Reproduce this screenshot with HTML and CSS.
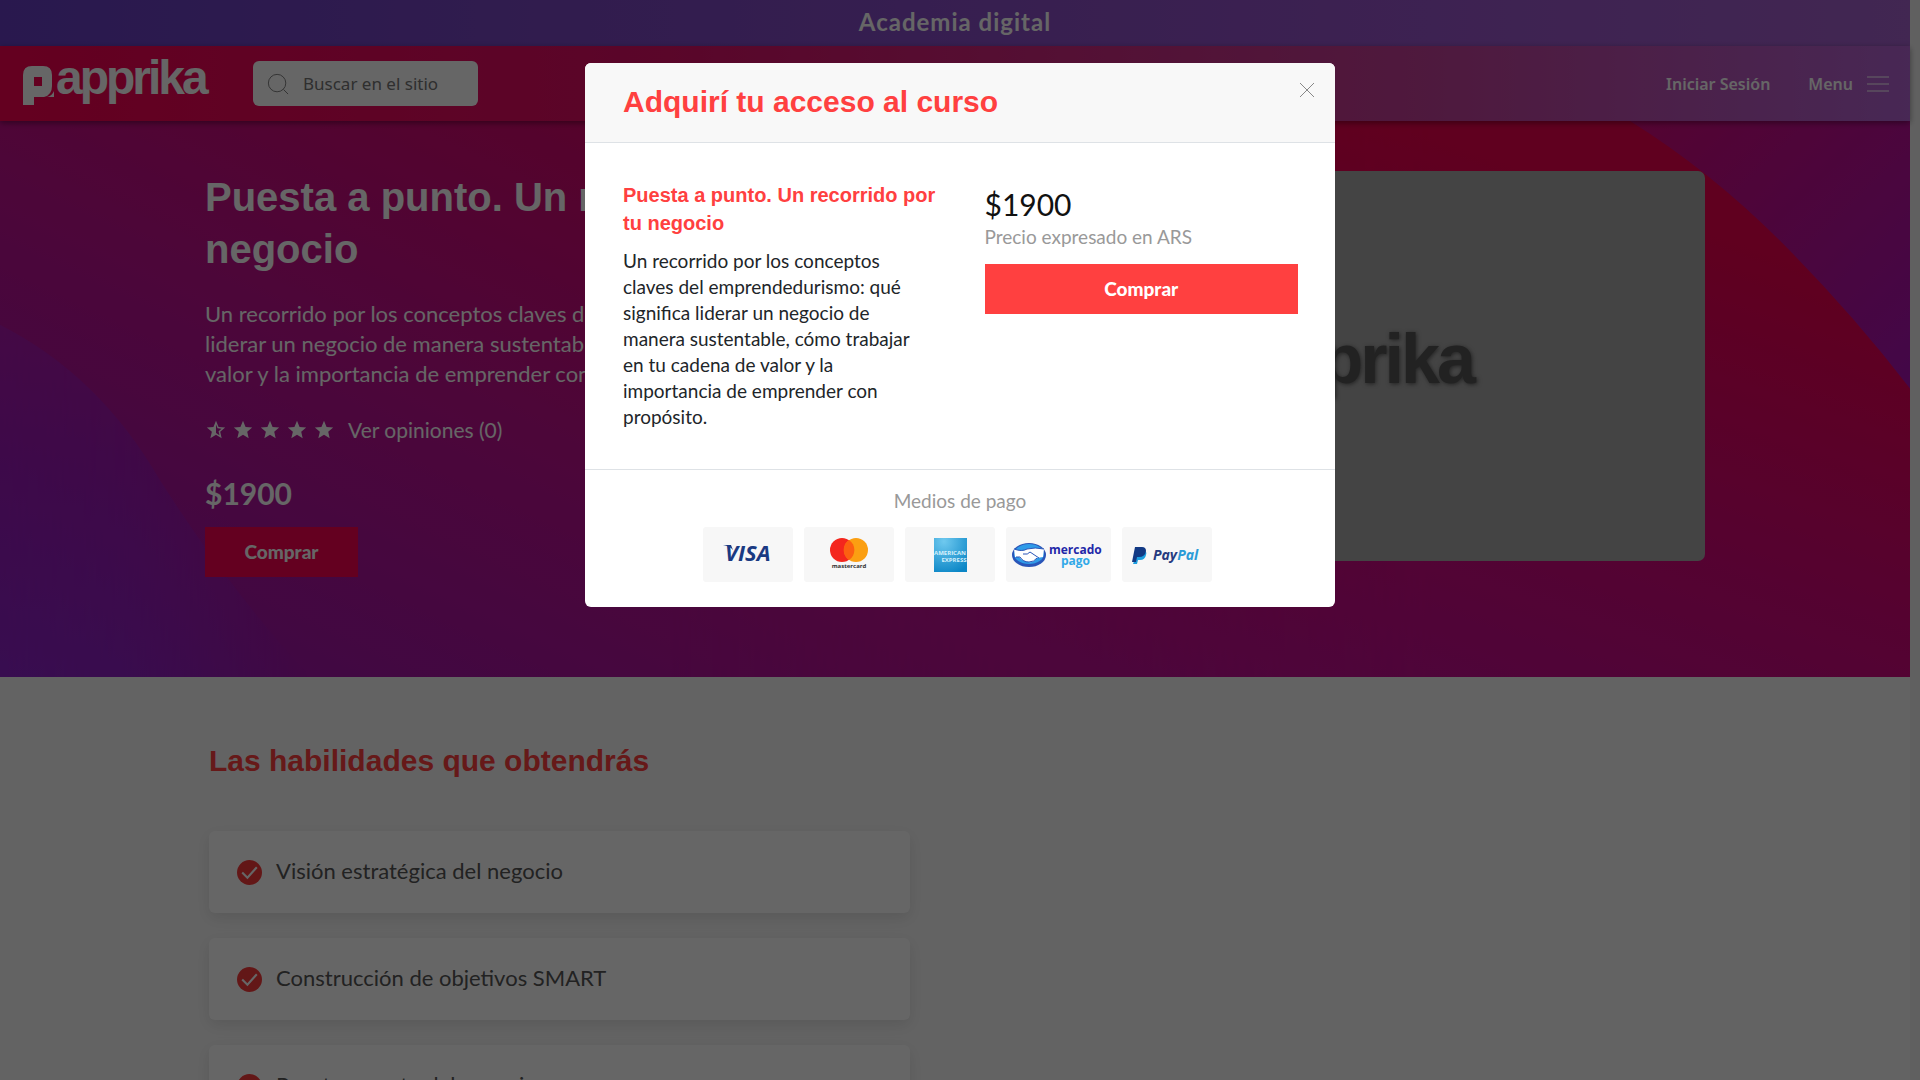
FILE: index.html
```
<!DOCTYPE html>
<html lang="es">

<head>
    <meta charset="UTF-8">
    <meta name="viewport" content="width=device-width, initial-scale=1.0">
    <title>Papprika - Puesta a punto</title>
    <link rel="stylesheet" href="styles.css">
</head>

<body>
    <div class="pagina">
        <div class="barra-superior">Academia digital</div>

        <header class="navbar">
            <a href="#" class="logo" aria-label="Papprika">
                <svg class="logo-p" viewBox="0 0 32 39">
                    <path fill="#fff" fill-rule="evenodd" d="M0 39V9Q0 0 9 0h11q9 0 9 9v11q0 9-8 11H11v8zM11 11v9h8v-9z" />
                    <path fill="#fff" d="M31 25v6h-7q5-1 7-6z" />
                </svg>
                <span>apprika</span>
            </a>
            <form class="buscador">
                <svg viewBox="0 0 24 24"><circle cx="11" cy="11" r="9.5" /><path d="M18 18l5 5" /></svg>
                <input type="text" placeholder="Buscar en el sitio" aria-label="Buscar en el sitio">
            </form>
            <nav class="menu">
                <a href="#">Iniciar Sesión</a>
                <button type="button">
                    Menu
                    <svg viewBox="0 0 22 16"><path d="M0 1h22M0 8h22M0 15h22" /></svg>
                </button>
            </nav>
        </header>

        <section class="hero">
            <svg class="hero-fondo" viewBox="0 0 1910 557" preserveAspectRatio="none" aria-hidden="true">
                <defs>
                    <linearGradient id="base" gradientUnits="userSpaceOnUse" x1="300" y1="650" x2="720" y2="-250">
                        <stop offset="0" stop-color="#9a16ae" />
                        <stop offset="0.4" stop-color="#be1090" />
                        <stop offset="0.75" stop-color="#d80768" />
                        <stop offset="1" stop-color="#f5003c" />
                    </linearGradient>
                    <linearGradient id="base2" gradientUnits="userSpaceOnUse" x1="1300" y1="620" x2="1500" y2="40">
                        <stop offset="0" stop-color="#bc109b" />
                        <stop offset="0.5" stop-color="#d4077a" />
                        <stop offset="1" stop-color="#ef004e" />
                    </linearGradient>
                    <linearGradient id="mezcla" x1="0" y1="0" x2="1" y2="0">
                        <stop offset="0.35" stop-color="#fff" stop-opacity="0" />
                        <stop offset="0.75" stop-color="#fff" />
                    </linearGradient>
                    <mask id="derecha"><rect width="1910" height="557" fill="url(#mezcla)" /></mask>
                    <linearGradient id="violeta" x1="0" y1="0" x2="0" y2="1">
                        <stop offset="0" stop-color="#aa18ac" />
                        <stop offset="0.4" stop-color="#9a18b8" />
                        <stop offset="1" stop-color="#8c22c8" />
                    </linearGradient>
                    <linearGradient id="fundido" x1="0" y1="0" x2="1" y2="0">
                        <stop offset="0" stop-color="#fff" />
                        <stop offset="0.4" stop-color="#fff" stop-opacity="0.8" />
                        <stop offset="1" stop-color="#fff" stop-opacity="0" />
                    </linearGradient>
                    <mask id="izquierda"><rect width="310" height="557" fill="url(#fundido)" /></mask>
                    <linearGradient id="esquina" x1="0" y1="0" x2="1" y2="1">
                        <stop offset="0" stop-color="#d20a7c" />
                        <stop offset="1" stop-color="#a713b4" />
                    </linearGradient>
                </defs>
                <rect width="1910" height="557" fill="url(#base)" />
                <rect width="1910" height="557" fill="url(#base2)" mask="url(#derecha)" />
                <path fill="url(#violeta)" mask="url(#izquierda)" d="M0 204Q100 255 160 360Q230 470 310 557H0z" />
                <path fill="url(#esquina)" d="M1630 0Q1710 50 1780 120Q1850 190 1910 268V0z" />
            </svg>

            <div class="hero-texto">
                <h1>Puesta a punto. Un recorrido por tu negocio</h1>
                <p class="descripcion">Un recorrido por los conceptos claves del emprendedurismo: qué significa liderar un negocio de manera sustentable, cómo trabajar en tu cadena de valor y la importancia de emprender con propósito.</p>
                <div class="opiniones">
                    <svg viewBox="0 0 24 24"><path d="M22 9.200l-7.200-.6L12 2 9.200 8.600 2 9.200l5.500 4.700L5.800 21 12 17.300 18.200 21l-1.600-7.100zM12 15.400V6.100l1.700 4 4.400.4-3.300 2.900 1 4.300z" /></svg>
                    <svg viewBox="0 0 24 24"><path d="M12 17.300L18.200 21l-1.600-7.100L22 9.200l-7.200-.6L12 2 9.200 8.600 2 9.200l5.500 4.700L5.800 21z" /></svg>
                    <svg viewBox="0 0 24 24"><path d="M12 17.300L18.200 21l-1.600-7.100L22 9.200l-7.200-.6L12 2 9.200 8.600 2 9.200l5.500 4.700L5.800 21z" /></svg>
                    <svg viewBox="0 0 24 24"><path d="M12 17.300L18.200 21l-1.600-7.100L22 9.200l-7.200-.6L12 2 9.200 8.600 2 9.200l5.500 4.700L5.800 21z" /></svg>
                    <svg viewBox="0 0 24 24"><path d="M12 17.300L18.200 21l-1.600-7.100L22 9.200l-7.200-.6L12 2 9.200 8.600 2 9.200l5.500 4.700L5.800 21z" /></svg>
                    <a href="#">Ver opiniones (0)</a>
                </div>
                <div class="precio">$1900</div>
                <button type="button" class="btn-comprar">Comprar</button>
            </div>

            <div class="hero-imagen"><span>papprika</span></div>
        </section>

        <section class="habilidades">
            <h2>Las habilidades que obtendrás</h2>
            <ul>
                <li>
                    <svg viewBox="0 0 24 24"><circle cx="12" cy="12" r="12" /><path d="M5 12l5 5 9-10" /></svg>
                    Visión estratégica del negocio
                </li>
                <li>
                    <svg viewBox="0 0 24 24"><circle cx="12" cy="12" r="12" /><path d="M5 12l5 5 9-10" /></svg>
                    Construcción de objetivos SMART
                </li>
                <li>
                    <svg viewBox="0 0 24 24"><circle cx="12" cy="12" r="12" /><path d="M5 12l5 5 9-10" /></svg>
                    Puesta a punto del negocio
                </li>
            </ul>
        </section>
    </div>

    <!-- Modal de compra -->
    <div class="fondo-modal">
        <div class="modal" role="dialog" aria-labelledby="titulo-modal">
            <div class="modal-header">
                <h2 id="titulo-modal">Adquirí tu acceso al curso</h2>
                <button type="button" class="cerrar" aria-label="Cerrar">
                    <svg viewBox="0 0 16 16"><path d="M1 1l14 14M15 1L1 15" /></svg>
                </button>
            </div>
            <div class="modal-body">
                <div class="curso">
                    <h3>Puesta a punto. Un recorrido por tu negocio</h3>
                    <p>Un recorrido por los conceptos claves del emprendedurismo: qué significa liderar un negocio de manera sustentable, cómo trabajar en tu cadena de valor y la importancia de emprender con propósito.</p>
                </div>
                <div class="compra">
                    <div class="precio">$1900</div>
                    <div class="moneda">Precio expresado en ARS</div>
                    <button type="button" class="btn-comprar">Comprar</button>
                </div>
            </div>
            <div class="modal-footer">
                <p>Medios de pago</p>
                <div class="medios">
                    <div class="medio">
                        <svg viewBox="0 0 90 55" aria-label="Visa">
                            <path fill="#1a3a82" d="M20 18h8l2 5q-3-4-10-5z" />
                            <text x="22" y="34" class="txt-visa">VISA</text>
                        </svg>
                    </div>
                    <div class="medio">
                        <svg viewBox="0 0 90 55" aria-label="Mastercard">
                            <circle cx="38" cy="23" r="12" fill="#f4261d" />
                            <circle cx="52" cy="23" r="12" fill="#fb9f12" />
                            <path fill="#fc6011" d="M45 13a12 12 0 0 1 0 20a12 12 0 0 1 0-20z" />
                            <text x="45" y="41" class="txt-master">mastercard</text>
                        </svg>
                    </div>
                    <div class="medio">
                        <svg viewBox="0 0 90 55" aria-label="American Express">
                            <defs>
                                <radialGradient id="amex" cx="0.3" cy="0.1" r="1">
                                    <stop offset="0" stop-color="#6fc9ef" />
                                    <stop offset="1" stop-color="#0b86c6" />
                                </radialGradient>
                            </defs>
                            <rect x="29" y="11" width="33" height="34" fill="url(#amex)" />
                            <text x="45" y="28" class="txt-amex">AMERICAN</text>
                            <text x="49" y="35" class="txt-amex">EXPRESS</text>
                        </svg>
                    </div>
                    <div class="medio medio-ancho">
                        <svg viewBox="0 0 105 55" aria-label="Mercado Pago">
                            <ellipse cx="23" cy="28" rx="17" ry="12" fill="#2a55b8" />
                            <ellipse cx="23" cy="27" rx="15" ry="10" fill="#2f9be8" />
                            <path fill="#fff" d="M8 22q8 3 13 0q8-2 17 0l-1 8-6 1q-3 5-9 4q-6-1-9-5H9z" />
                            <path fill="none" stroke="#2a55b8" d="M8 22q8 3 13 0q8-2 17 0M17 27q5 1 7-2l9 6M10 30h4q3 5 9 5q5 0 8-4" />
                            <text x="43" y="27" class="txt-mercado">mercado</text>
                            <text x="55" y="38" class="txt-pago">pago</text>
                        </svg>
                    </div>
                    <div class="medio">
                        <svg viewBox="0 0 90 55" aria-label="PayPal">
                            <path fill="#1c9ee0" d="M16 24h7q2 1 1 4q-1 5-6 5h-2l-1 4h-4z" />
                            <path fill="#123984" d="M13 20h7q4 0 4 4q-1 6-7 6h-2l-1 5h-4z" />
                            <text x="31" y="33" class="txt-paypal">Pay<tspan>Pal</tspan></text>
                        </svg>
                    </div>
                </div>
            </div>
        </div>
    </div>
</body>

</html>
```
FILE: styles.css
```
* {
    box-sizing: border-box;
}

body {
    margin: 0;
    height: 100vh;
    overflow: hidden;
    background-color: #f1f1f1;
    font-family: Lato, 'Open Sans', sans-serif;
    color: #212529;
}

h1,
h2,
h3 {
    margin: 0;
    font-family: 'Liberation Sans', Arial, sans-serif;
    font-weight: bold;
}

p {
    margin: 0;
}

button {
    font-family: inherit;
    border: none;
    cursor: pointer;
}

.pagina {
    margin-right: 10px;
    background-color: #f8f8f8;
}

/* Encabezado */
.barra-superior {
    height: 46px;
    line-height: 44px;
    text-align: center;
    font-size: 24px;
    font-weight: bold;
    letter-spacing: 1px;
    color: #fff;
    background: linear-gradient(90deg, #663ec3, #7846c3 25%, #9a55cc 75%, #a561cd);
}

.navbar {
    position: relative;
    z-index: 1;
    height: 75px;
    padding: 0 21px 0 23px;
    display: flex;
    align-items: center;
    background: linear-gradient(90deg, #fa0050, #e00f68 35%, #c4409b 75%, #b464d4);
    box-shadow: 0 2px 6px rgba(0, 0, 0, 0.4);
}

.logo {
    display: flex;
    align-items: center;
    gap: 1px;
    width: 190px;
    padding-bottom: 11px;
    color: #fff;
    text-decoration: none;
}

.logo-p {
    flex: none;
    width: 32px;
    height: 39px;
    margin-top: 14px;
}

.logo span {
    font-family: 'Liberation Sans', Arial, sans-serif;
    font-size: 48px;
    font-weight: bold;
    line-height: 48px;
    letter-spacing: -3px;
}

.buscador {
    display: flex;
    align-items: center;
    gap: 12px;
    width: 225px;
    height: 45px;
    margin-left: 40px;
    padding: 0 14px;
    background-color: #fff;
    border-radius: 6px;
}

.buscador svg {
    flex: none;
    width: 22px;
    height: 24px;
    fill: none;
    stroke: #777;
}

.buscador input {
    width: 100%;
    padding: 0 2px;
    border: none;
    outline: none;
    background: none;
    font-family: 'Noto Sans', sans-serif;
    font-size: 17px;
    color: #555;
}

.buscador input::placeholder {
    color: #757575;
}

.menu {
    display: flex;
    align-items: center;
    gap: 38px;
    margin-left: auto;
}

.menu a,
.menu button {
    display: flex;
    align-items: center;
    gap: 14px;
    padding: 0;
    background: none;
    font-family: 'Noto Sans', sans-serif;
    font-size: 16px;
    font-weight: 600;
    color: #fff;
    text-decoration: none;
}

.menu svg {
    width: 22px;
    height: 16px;
    stroke: #fff;
}

/* Curso */
.hero {
    position: relative;
    display: flex;
    justify-content: space-between;
    height: 556px;
    padding: 50px 205px 0;
    color: #fff;
}

.hero-fondo {
    position: absolute;
    top: 0;
    left: 0;
    width: 100%;
    height: 100%;
}

.hero-texto {
    position: relative;
    width: 48%;
}

.hero h1 {
    font-size: 40px;
    line-height: 52px;
}

.descripcion {
    margin-top: 24px;
    font-size: 22px;
    line-height: 30px;
}

.opiniones {
    display: flex;
    align-items: center;
    gap: 5px;
    margin-top: 26px;
}

.opiniones svg {
    width: 22px;
    height: 22px;
    fill: #fff;
}

.opiniones a {
    margin-left: 8px;
    font-size: 21px;
    line-height: 30px;
    color: #fff;
    text-decoration: none;
}

.precio {
    font-size: 30px;
    line-height: 40px;
}

.hero .precio {
    margin-top: 28px;
    font-weight: bold;
}

.btn-comprar {
    display: block;
    height: 50px;
    padding: 0 0 2px;
    background-color: #ff4040;
    color: #fff;
    font-size: 19px;
    font-weight: 900;
}

.hero .btn-comprar {
    width: 153px;
    margin-top: 14px;
    background-color: #fa0050;
}

.hero-imagen {
    position: relative;
    display: flex;
    align-items: center;
    justify-content: center;
    width: 46%;
    height: 390px;
    padding: 0 42px 14px 0;
    background-color: #aaa;
    border-radius: 7px;
}

.hero-imagen span {
    font-family: 'Liberation Sans', Arial, sans-serif;
    font-size: 70px;
    font-weight: bold;
    letter-spacing: -3px;
    color: #555;
    text-shadow: 1px 1px 4px #555;
}

/* Habilidades */
.habilidades {
    padding: 64px 209px 0;
}

.habilidades h2 {
    font-size: 30px;
    line-height: 40px;
    color: #ff4040;
}

.habilidades ul {
    display: flex;
    flex-direction: column;
    gap: 25px;
    width: 47%;
    margin: 50px 0 0;
    padding: 0;
    list-style: none;
}

.habilidades li {
    display: flex;
    align-items: center;
    gap: 14px;
    height: 82px;
    padding: 0 28px 4px;
    background-color: #fff;
    border-radius: 6px;
    box-shadow: 0 5px 15px rgba(0, 0, 0, 0.1);
    font-size: 22px;
    color: #555;
}

.habilidades svg {
    width: 25px;
    height: 25px;
    margin-top: 4px;
    fill: #f83b3b;
}

.habilidades svg path {
    fill: none;
    stroke: #fff;
    stroke-width: 2;
}

/* Modal */
.fondo-modal {
    position: fixed;
    inset: 0;
    z-index: 10;
    padding-top: 63px;
    background-color: rgba(0, 0, 0, 0.6);
}

.modal {
    width: 750px;
    margin: 0 auto;
    background-color: #fff;
    border-radius: 6px;
    overflow: hidden;
}

.modal-header {
    display: flex;
    justify-content: space-between;
    align-items: flex-start;
    padding: 19px 20px 20px 38px;
    background-color: #f8f8f8;
    border-bottom: 1px solid #dee2e6;
}

.modal-header h2 {
    font-size: 30px;
    line-height: 40px;
    color: #ff4040;
}

.cerrar {
    padding: 0;
    background: none;
}

.cerrar svg {
    display: block;
    width: 16px;
    height: 16px;
    stroke: #888;
}

.modal-body {
    display: grid;
    grid-template-columns: 1fr 1fr;
    gap: 48px;
    padding: 38px 37px 39px 38px;
    border-bottom: 1px solid #dee2e6;
}

.curso h3 {
    font-size: 20px;
    line-height: 28px;
    color: #ff4040;
}

.curso p {
    margin-top: 11px;
    padding-right: 15px;
    font-size: 19px;
    line-height: 26px;
}

.compra .precio {
    margin-top: 3px;
    color: #111;
}

.moneda,
.modal-footer p {
    font-size: 19px;
    line-height: 26px;
    color: #999;
}

.compra .btn-comprar {
    width: 100%;
    margin-top: 14px;
}

.modal-footer {
    padding: 18px 20px 25px;
    text-align: center;
}

.medios {
    display: flex;
    justify-content: center;
    gap: 11px;
    margin-top: 13px;
    padding-right: 6px;
}

.medio {
    width: 90px;
    height: 55px;
    background-color: #f7f7f7;
    border-radius: 3px;
}

.medio-ancho {
    width: 105px;
}

.medio svg {
    display: block;
    width: 100%;
    height: 100%;
    font-family: 'Open Sans', sans-serif;
    font-weight: bold;
}

.txt-visa {
    font-size: 22px;
    font-style: italic;
    fill: #1a3a82;
}

.txt-master {
    font-size: 6px;
    text-anchor: middle;
    fill: #333;
}

.txt-amex {
    font-size: 6px;
    text-anchor: middle;
    fill: #d5f0fb;
}

.txt-mercado,
.txt-pago {
    font-size: 12px;
    fill: #2327a8;
}

.txt-pago {
    fill: #32a9e8;
}

.txt-paypal {
    font-size: 14px;
    font-style: italic;
    fill: #253b80;
}

.txt-paypal tspan {
    fill: #2a9bd7;
}
```
